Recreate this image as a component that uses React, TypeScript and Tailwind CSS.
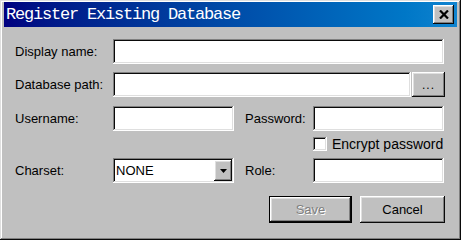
import React from 'react';

const raised =
  'shadow-[inset_-1px_-1px_#0a0a0a,inset_1px_1px_#ffffff,inset_-2px_-2px_#808080,inset_2px_2px_#dfdfdf]';
const sunken =
  'shadow-[inset_-1px_-1px_#ffffff,inset_1px_1px_#808080,inset_-2px_-2px_#dfdfdf,inset_2px_2px_#0a0a0a]';

function Field({ className = '' }: { className?: string }) {
  return <div className={`h-[25px] bg-white ${sunken} ${className}`} />;
}

function Label({ text, className = '' }: { text: string; className?: string }) {
  return <div className={`shrink-0 text-[13px] leading-none text-black ${className}`}>{text}</div>;
}

export default function App() {
  return (
    <div
      className={`w-[461px] h-[240px] bg-[#c0c0c0] flex flex-col p-[2px] overflow-hidden select-none font-['Liberation_Sans',Arial,sans-serif] ${'shadow-[inset_-1px_-1px_#0a0a0a,inset_1px_1px_#dfdfdf,inset_-2px_-2px_#808080,inset_2px_2px_#ffffff]'}`}
    >
      {/* title bar */}
      <div className="ml-[2px] mr-[2px] h-[25px] flex items-center justify-between bg-gradient-to-r from-[#000080] to-[#1084d0]">
        <span className="pl-[2px] text-white text-[17px] tracking-[-1.2px] leading-none font-['Liberation_Mono','Courier_New',monospace]">
          Register Existing Database
        </span>
        <button
          className={`mr-[3px] w-[21px] h-[19px] bg-[#c0c0c0] flex items-center justify-center ${raised}`}
        >
          <svg width="10" height="9" viewBox="0 0 10 9">
            <path d="M1 0.5 L9 8.5 M9 0.5 L1 8.5" stroke="#000" strokeWidth="2.2" />
          </svg>
        </button>
      </div>

      <div className="flex flex-col pl-[13px] pt-[12px]">
        {/* display name */}
        <div className="flex items-center h-[25px]">
          <Label text="Display name:" className="w-[98px]" />
          <Field className="w-[331px]" />
        </div>

        {/* database path */}
        <div className="flex items-center h-[25px] mt-[8px]">
          <Label text="Database path:" className="w-[98px]" />
          <Field className="w-[298px]" />
          <button
            className={`ml-[1px] w-[33px] h-[25px] bg-[#c0c0c0] flex items-end justify-center pb-[6px] text-[12px] leading-none tracking-[1px] ${raised}`}
          >
            ...
          </button>
        </div>

        {/* username / password */}
        <div className="flex items-center h-[25px] mt-[9px]">
          <Label text="Username:" className="w-[98px]" />
          <Field className="w-[121px]" />
          <Label text="Password:" className="ml-[11px] w-[68px]" />
          <Field className="w-[131px]" />
        </div>

        {/* encrypt */}
        <div className="flex items-center h-[14px] mt-[6px] pl-[298px]">
          <div className={`w-[14px] h-[14px] bg-white ${sunken}`} />
          <span className="ml-[5px] text-[14px] leading-none">Encrypt password</span>
        </div>

        {/* charset / role */}
        <div className="flex items-center h-[25px] mt-[7px]">
          <Label text="Charset:" className="w-[98px]" />
          <div className={`w-[121px] h-[25px] bg-white flex items-center pl-[3px] pr-[2px] ${sunken}`}>
            <span className="flex-1 text-[13px] leading-none text-black">NONE</span>
            <div className={`w-[18px] h-[21px] bg-[#c0c0c0] flex items-center justify-center ${raised}`}>
              <svg width="7" height="4" viewBox="0 0 7 4">
                <path d="M0 0 H7 L3.5 4 Z" fill="#000" />
              </svg>
            </div>
          </div>
          <Label text="Role:" className="ml-[11px] w-[68px]" />
          <Field className="w-[131px]" />
        </div>

        {/* buttons */}
        <div className="flex items-center mt-[13px] pl-[254px] gap-[8px]">
          <button
            className={`w-[83px] h-[27px] bg-[#c0c0c0] border border-black flex items-center justify-center text-[13px] leading-none text-[#808080] [text-shadow:1px_1px_0_#ffffff] ${raised}`}
          >
            Save
          </button>
          <button
            className={`w-[85px] h-[27px] bg-[#c0c0c0] flex items-center justify-center text-[13px] leading-none text-black ${raised}`}
          >
            Cancel
          </button>
        </div>
      </div>
    </div>
  );
}
